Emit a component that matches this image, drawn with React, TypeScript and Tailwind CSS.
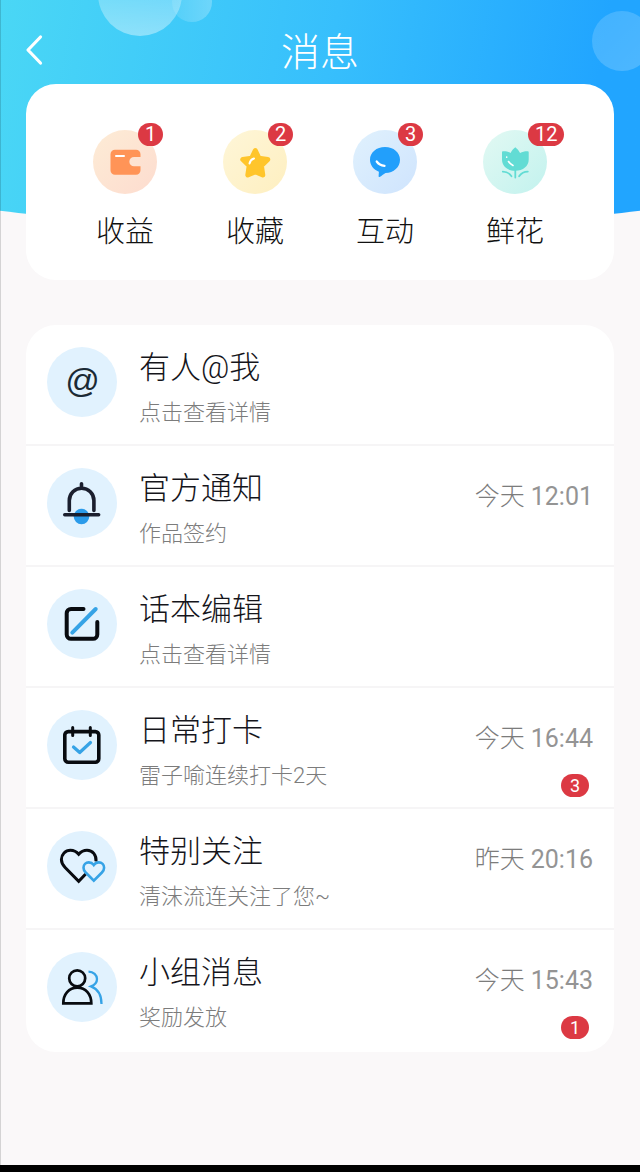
import type { ReactNode } from "react";

const WalletIcon = () => (
  <svg viewBox="0 0 64 64" className="size-16" aria-hidden="true">
    <path
      d="M22 19.700h21a4.500 4.500 0 0 1 4.500 4.500V27h-6.500a4.600 4.600 0 0 0 0 9.300h6.500v4A4.500 4.500 0 0 1 43 44.800H22a4.500 4.500 0 0 1-4.500-4.500V24.200A4.500 4.500 0 0 1 22 19.700Z"
      fill="#ff9457"
    />
    <path d="M23 26h8" stroke="#fff" strokeWidth="2" strokeLinecap="round" />
  </svg>
);

const StarIcon = () => (
  <svg viewBox="0 0 64 64" className="size-16" aria-hidden="true">
    <path
      d="M32.300 20.500 36 28.300 44.800 29.500 38.400 35.600 39.800 45 32.300 41.800 24.800 45 26.200 35.600 19.800 29.500 28.600 28.300Z"
      fill="#ffc52b"
      stroke="#ffc52b"
      strokeWidth="5"
      strokeLinejoin="round"
    />
    <path d="M26.500 33.500c.5-2.500 2-4.300 4.500-5" stroke="#fff" strokeWidth="2" strokeLinecap="round" fill="none" />
  </svg>
);

const ChatIcon = () => (
  <svg viewBox="0 0 64 64" className="size-16" aria-hidden="true">
    <path
      d="M32 17c8.500 0 15 5.500 15 12.700 0 7.500-6.300 13-14.500 13.300-2 1.300-4 3-6 4-.6.2-1-.2-.9-.8l.3-4.500C20.500 39.500 17 35 17 29.700 17 22.500 23.500 17 32 17Z"
      fill="#229ffb"
    />
    <path d="M23.700 31.500c1.800 2.600 4.300 4 7.800 4.300" stroke="#fff" strokeWidth="2.200" strokeLinecap="round" fill="none" />
  </svg>
);

const FlowerIcon = () => (
  <svg viewBox="0 0 64 64" className="size-16" aria-hidden="true">
    <path
      d="M32.300 17.300c2 1.600 3.600 3.500 4.800 5.600 2.300-1.300 4.800-1.800 7.700-1.700.6 0 .9.400.9.900v7.500c0 6.600-5.500 11.200-13.400 11.200S19 36.200 19 29.600v-7.500c0-.5.3-.9.900-.9 2.900-.1 5.400.4 7.700 1.700 1.200-2.100 2.700-4 4.700-5.600Z"
      fill="#62dcd4"
    />
    <path
      d="M32.300 40v7.500M19.800 41.600c3.500 0 6.500 1.500 8.700 4.700M44.800 41.600c-3.500 0-6.500 1.500-8.700 4.700"
      stroke="#62dcd4"
      strokeWidth="1.800"
      strokeLinecap="round"
      fill="none"
    />
    <path d="M23.700 27v.2M25.500 31.500c1.200 1.800 2.700 3 4.500 4" stroke="#fff" strokeWidth="1.600" strokeLinecap="round" fill="none" />
  </svg>
);

const BellIcon = () => (
  <svg viewBox="0 0 70 70" className="size-[70px]" fill="none" strokeLinecap="round" aria-hidden="true">
    <circle cx="34.500" cy="48.500" r="7.800" fill="#2b9bea" />
    <path d="M22.300 42.500V32.500a12.300 12.300 0 0 1 24.600 0v10M34.500 15.800V19" stroke="#1b1f2e" strokeWidth="3.600" />
    <path d="M17.700 46.800h34" stroke="#1b1f2e" strokeWidth="3.400" />
  </svg>
);

const EditIcon = () => (
  <svg viewBox="0 0 70 70" className="size-[70px]" fill="none" strokeLinecap="round" strokeWidth="4" aria-hidden="true">
    <path d="M36.500 20H24a4.300 4.300 0 0 0-4.300 4.300v21.200a4.300 4.300 0 0 0 4.300 4.300h22a4.300 4.300 0 0 0 4.300-4.300V33" stroke="#080b10" />
    <path d="M25.300 43.700 48.700 20" stroke="#36a3e6" />
  </svg>
);

const CalendarIcon = () => (
  <svg viewBox="0 0 70 70" className="size-[70px]" fill="none" strokeLinecap="round" aria-hidden="true">
    <rect x="17.800" y="21.600" width="34" height="30.600" rx="3.500" stroke="#080b10" strokeWidth="3.600" />
    <path d="M25.700 17.500v8M43.300 17.500v8" stroke="#080b10" strokeWidth="3" />
    <path d="m26.500 37 6.200 5.500 10.800-10" stroke="#36a3e6" strokeWidth="3.200" strokeLinejoin="round" />
  </svg>
);

const HeartsIcon = () => (
  <svg viewBox="0 0 70 70" className="size-[70px]" fill="none" aria-hidden="true">
    <path
      d="M49 30.500c.6-6.500-3.500-11.300-9-11.300-3.300 0-6.200 1.500-8.300 4-2.100-2.500-5-4-8.300-4-5 0-9 4.200-9 9.300 0 3.300 1.500 5.700 3.700 8L31.700 50.300 38.700 43"
      stroke="#080b10"
      strokeWidth="3"
    />
    <path
      d="M46.800 34c-1.300-1.700-3-2.600-5-2.600-3 0-5.300 2.400-5.300 5.300 0 2 .9 3.400 2.200 4.800l8.100 8.200 8.100-8.200c1.300-1.400 2.200-2.800 2.200-4.800 0-2.900-2.300-5.300-5.300-5.300-2 0-3.700.9-5 2.600Z"
      stroke="#36a3e6"
      strokeWidth="2.600"
    />
  </svg>
);

const GroupIcon = () => (
  <svg viewBox="0 0 70 70" className="size-[70px]" fill="none" aria-hidden="true">
    <circle cx="30.200" cy="26.300" r="8" stroke="#080b10" strokeWidth="2.700" />
    <path d="M16.300 51.300c0-9 5.500-15.700 14-15.700s14 6.700 14 15.700Z" stroke="#080b10" strokeWidth="2.700" />
    <path
      d="M41.500 19.600c5 .1 8.500 3.500 8.500 7.400 0 3.500-2.500 6-6 7.400 7 2.700 10.500 8.500 10.500 17.600"
      stroke="#36a3e6"
      strokeWidth="2.300"
    />
  </svg>
);

const SHORTCUTS = [
  { label: "收益", count: 1, icon: <WalletIcon />, bg: "from-[#fdecd6] to-[#fddccf]" },
  { label: "收藏", count: 2, icon: <StarIcon />, bg: "from-[#fef6d8] to-[#feefc0]" },
  { label: "互动", count: 3, icon: <ChatIcon />, bg: "from-[#e0f1fd] to-[#cfe4fd]" },
  { label: "鲜花", count: 12, icon: <FlowerIcon />, bg: "from-[#e2f9f3] to-[#c2f2ee]" },
];

type Message = {
  title: string;
  detail: string;
  icon: ReactNode;
  day?: string;
  clock?: string;
  count?: number;
};

const MESSAGES: Message[] = [
  {
    title: "有人@我",
    detail: "点击查看详情",
    icon: <span className="pb-1 font-['Liberation_Sans',sans-serif] text-[34px] leading-[66px] font-normal text-[#1b2a35] italic">@</span>,
  },
  { title: "官方通知", detail: "作品签约", icon: <BellIcon />, day: "今天", clock: "12:01" },
  { title: "话本编辑", detail: "点击查看详情", icon: <EditIcon /> },
  { title: "日常打卡", detail: "雷子喻连续打卡2天", icon: <CalendarIcon />, day: "今天", clock: "16:44", count: 3 },
  { title: "特别关注", detail: "清沫流连关注了您~", icon: <HeartsIcon />, day: "昨天", clock: "20:16" },
  { title: "小组消息", detail: "奖励发放", icon: <GroupIcon />, day: "今天", clock: "15:43", count: 1 },
];

export default function App() {
  return (
    <div className="relative flex min-h-screen flex-col overflow-hidden border-b-[7px] border-black bg-[#faf8f9] font-['Roboto','Noto_Sans_CJK_SC',sans-serif] font-light">
      {/* curved gradient behind the header and the first card */}
      <div className="absolute top-0 -left-1/2 h-[228px] w-[200%] overflow-hidden rounded-[0_0_50%_50%/0_0_128px_128px]">
        <div className="relative mx-auto h-full w-1/2 overflow-hidden bg-linear-100 from-[#4ad7f5] via-[#37bffc] to-[#21a5ff] to-90%">
          <div className="absolute -top-12 left-[98px] size-[84px] rounded-full bg-linear-to-b from-white/10 to-white/40" />
          <div className="absolute -top-[18px] left-[172px] size-10 rounded-full bg-linear-to-r from-white/10 to-white/25" />
          <div className="absolute top-[11px] -right-[12px] size-[60px] rounded-full bg-linear-to-br from-white/15 to-white/20" />
        </div>
      </div>
      <div className="absolute inset-y-0 left-0 w-px bg-black/15" />

      <header className="relative flex h-[84px] items-center justify-center pt-[22px]">
        <button type="button" aria-label="返回" className="absolute top-[34px] left-6 cursor-pointer">
          <svg viewBox="0 0 20 32" className="h-8 w-5" fill="none" aria-hidden="true">
            <path d="M16.500 3 4 16l12.500 13" stroke="#fff" strokeWidth="3.200" strokeLinecap="round" strokeLinejoin="round" />
          </svg>
        </button>
        <h1 className="text-[39px] leading-[56px] text-white">消息</h1>
      </header>

      <main className="relative flex flex-col gap-[45px] px-[26px]">
        <nav className="grid grid-cols-4 rounded-[30px] bg-white px-[34px] pt-[46px] pb-7">
          {SHORTCUTS.map((s) => (
            <button key={s.label} type="button" className="flex cursor-pointer flex-col items-center gap-[18px]">
              <span className={`relative size-16 rounded-full bg-linear-to-br ${s.bg}`}>
                {s.icon}
                <span className="absolute -top-[7px] left-[45px] min-w-[25px] rounded-full bg-[#dc3943] px-[7px] text-center text-[20px] leading-[23px] font-normal text-white">
                  {s.count}
                </span>
              </span>
              <span className="text-[29px] leading-[40px] text-[#111]">{s.label}</span>
            </button>
          ))}
        </nav>

        <ul className="divide-y-2 divide-[#f6f5f6] rounded-[30px] bg-white">
          {MESSAGES.map((m) => (
            <li key={m.title} className="pb-7 last:pb-[31px]">
              <button type="button" className="flex h-[91px] w-full cursor-pointer items-start px-[21px] pt-[22px] text-left">
                <span className="flex size-[70px] shrink-0 items-center justify-center rounded-full bg-[#e1f2fe]">{m.icon}</span>
                <span className="ml-[22px] flex min-w-0 flex-1 flex-col gap-2">
                  <span className="text-[31px] leading-[42px] text-[#15151b]">{m.title}</span>
                  <span className="text-[22px] leading-[32px] text-[#7c7c7c]">{m.detail}</span>
                </span>
                <span className="flex flex-col items-end gap-[18px] pt-3">
                  {m.day && (
                    <span className="text-[25px] leading-[34px] text-[#7c7c7c]">
                      {m.day} <span className="font-normal text-[#949494]">{m.clock}</span>
                    </span>
                  )}
                  {m.count && (
                    <span className="mr-1 min-w-7 rounded-full bg-[#dc3943] text-center text-[18px] leading-[23px] font-normal text-white">
                      {m.count}
                    </span>
                  )}
                </span>
              </button>
            </li>
          ))}
        </ul>
      </main>
    </div>
  );
}
